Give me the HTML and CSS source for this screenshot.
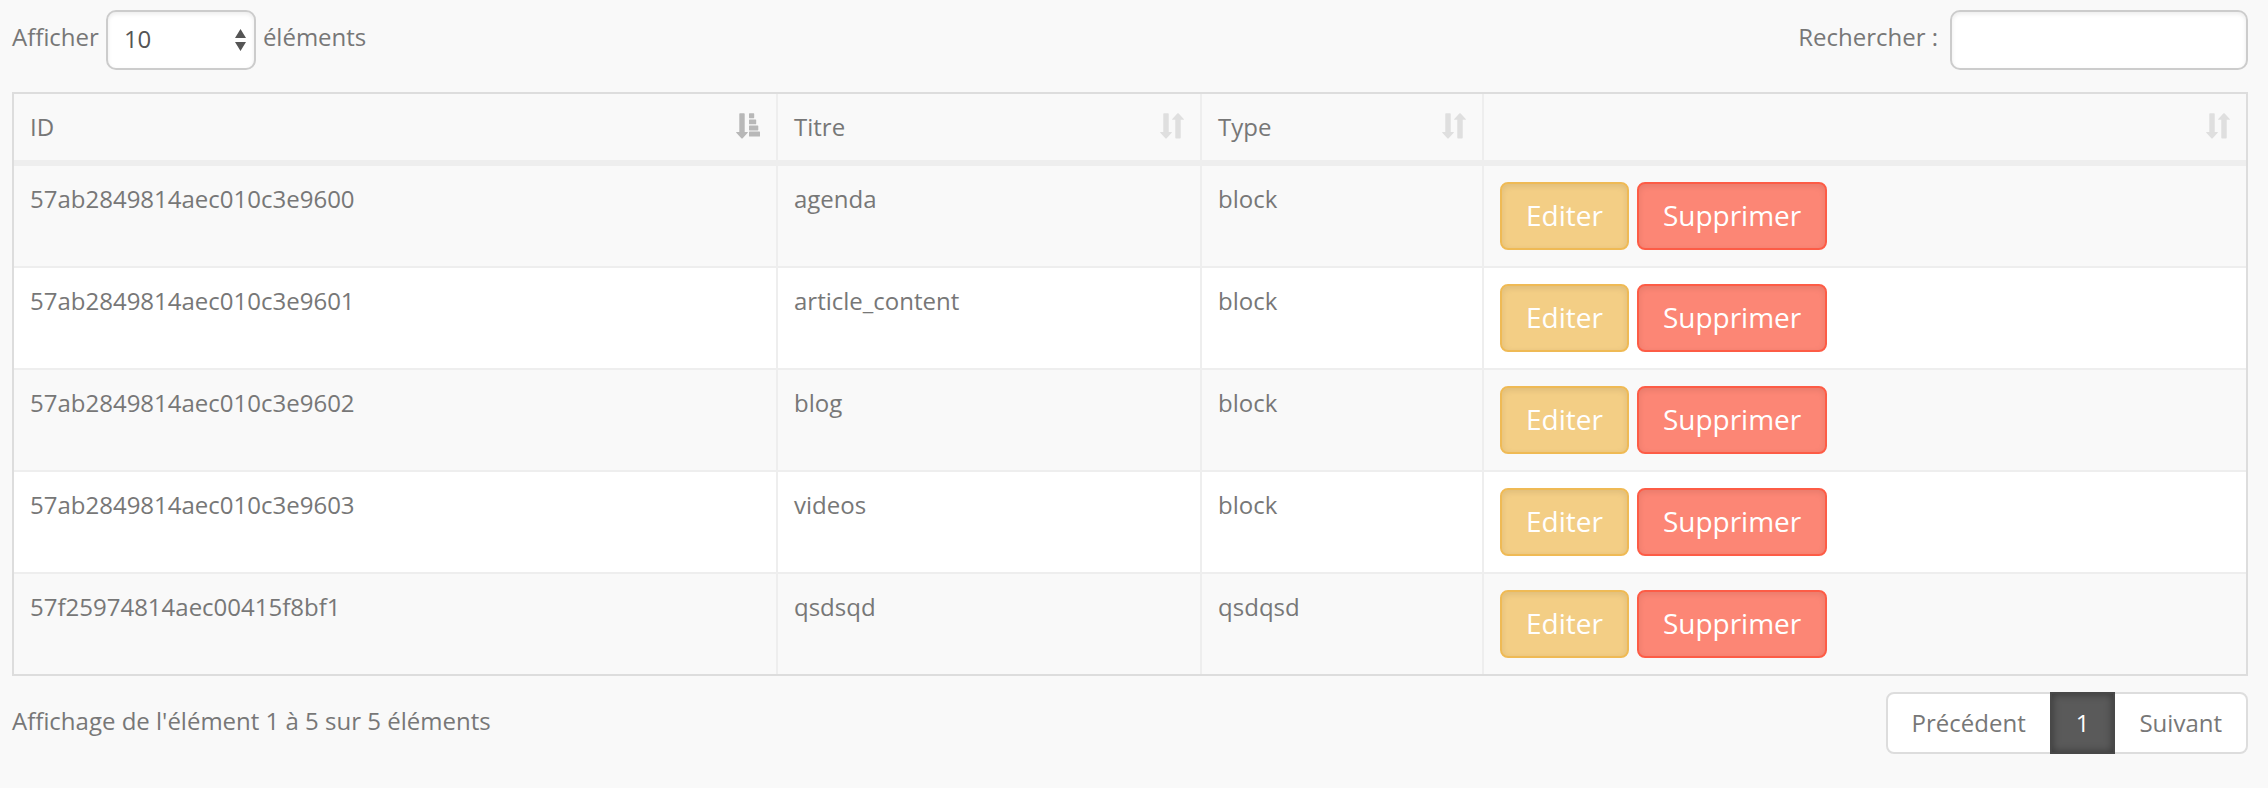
FILE: index.html
```html
<!DOCTYPE html>
<html lang="fr">
<head>
<meta charset="utf-8">
<title>Éléments</title>
<link rel="stylesheet" href="styles.css">
</head>
<body>
<svg class="sprite" aria-hidden="true">
  <symbol id="sort-both" viewBox="0 0 24 26">
    <path d="M4 .3h4a.7.7 0 0 1 .7.7v18h2.7q.9 0 .3.8L6.7 25.2q-.7.6-1.4 0L.3 19.8q-.6-.8.3-.8h2.7V1A.7.7 0 0 1 4 .3z"/>
    <path d="M16 25.5h4a.7.7 0 0 0 .7-.7V6.8h2.7q.9 0 .3-.8L18.7.6q-.7-.6-1.4 0L12.3 6q-.6.8.3.8h2.7v18a.7.7 0 0 0 .7.7z"/>
  </symbol>
  <symbol id="sort-asc" viewBox="0 0 24 26">
    <path d="M4 .3h4a.7.7 0 0 1 .7.7v18h2.7q.9 0 .3.8L6.7 25.2q-.7.6-1.4 0L.3 19.8q-.6-.8.3-.8h2.7V1A.7.7 0 0 1 4 .3z"/>
    <rect x="13" y=".3" width="5.2" height="4.9" rx=".6"/>
    <rect x="13" y="6.4" width="7.2" height="4.9" rx=".6"/>
    <rect x="13" y="12.5" width="9.3" height="4.9" rx=".6"/>
    <rect x="13" y="18.6" width="11" height="4.9" rx=".6"/>
  </symbol>
</svg>

<div class="toolbar">
  <div class="field">
    <label class="field-text" for="length">Afficher</label>
    <div class="select">
      <select id="length" class="control length">
        <option>10</option>
        <option>25</option>
        <option>50</option>
        <option>100</option>
      </select>
      <svg class="select-arrows" viewBox="0 0 11 22" aria-hidden="true"><path d="M5.500 0 11 9H0zM0 13h11l-5.500 9z"/></svg>
    </div>
    <span class="field-text">éléments</span>
  </div>
  <div class="field search">
    <label class="field-text" for="search">Rechercher :</label>
    <input id="search" class="control search-input" type="search">
  </div>
</div>

<table class="grid">
  <colgroup><col class="col-id"><col class="col-title"><col class="col-type"><col></colgroup>
  <thead>
    <tr>
      <th scope="col" aria-sort="ascending"><div class="head">ID<svg class="sort active"><use href="#sort-asc"/></svg></div></th>
      <th scope="col"><div class="head">Titre<svg class="sort"><use href="#sort-both"/></svg></div></th>
      <th scope="col"><div class="head">Type<svg class="sort"><use href="#sort-both"/></svg></div></th>
      <th scope="col" aria-label="Actions"><div class="head end"><svg class="sort"><use href="#sort-both"/></svg></div></th>
    </tr>
  </thead>
  <tbody>
    <tr><td>57ab2849814aec010c3e9600</td><td>agenda</td><td>block</td><td><div class="actions"><button class="btn edit" type="button">Editer</button><button class="btn delete" type="button">Supprimer</button></div></td></tr>
    <tr><td>57ab2849814aec010c3e9601</td><td>article_content</td><td>block</td><td><div class="actions"><button class="btn edit" type="button">Editer</button><button class="btn delete" type="button">Supprimer</button></div></td></tr>
    <tr><td>57ab2849814aec010c3e9602</td><td>blog</td><td>block</td><td><div class="actions"><button class="btn edit" type="button">Editer</button><button class="btn delete" type="button">Supprimer</button></div></td></tr>
    <tr><td>57ab2849814aec010c3e9603</td><td>videos</td><td>block</td><td><div class="actions"><button class="btn edit" type="button">Editer</button><button class="btn delete" type="button">Supprimer</button></div></td></tr>
    <tr><td>57f25974814aec00415f8bf1</td><td>qsdsqd</td><td>qsdqsd</td><td><div class="actions"><button class="btn edit" type="button">Editer</button><button class="btn delete" type="button">Supprimer</button></div></td></tr>
  </tbody>
</table>

<div class="footer">
  <div class="info">Affichage de l'élément 1 à 5 sur 5 éléments</div>
  <nav class="pagination" aria-label="Pagination">
    <a class="page" href="#">Précédent</a>
    <a class="page current" href="#" aria-current="page">1</a>
    <a class="page" href="#">Suivant</a>
  </nav>
</div>
</body>
</html>
```
FILE: styles.css
```css
* {
  box-sizing: border-box;
}

body {
  margin: 0;
  padding: 10px 20px 20px 12px;
  background: #f9f9f9;
  color: #777;
  font: 24px/34px "Open Sans", "Noto Sans", sans-serif;
}

.sprite {
  display: none;
}

.toolbar,
.footer {
  display: flex;
  justify-content: space-between;
  align-items: flex-start;
}

.field {
  display: flex;
  align-items: flex-start;
  gap: 7px;
}

.search {
  gap: 12px;
}

.field-text {
  padding-top: 10px;
}

.control {
  display: block;
  height: 60px;
  margin: 0;
  padding: 8px 16px 10px;
  border: 2px solid #ccc;
  border-radius: 10px;
  background: #fff;
  box-shadow: inset 0 2px 4px rgba(0, 0, 0, 0.08);
  color: #555;
  font: inherit;
  appearance: none;
}

.select {
  position: relative;
}

.length {
  width: 150px;
}

.select-arrows {
  position: absolute;
  top: 19px;
  right: 10px;
  width: 11px;
  height: 22px;
  fill: #555;
  pointer-events: none;
}

.search-input {
  width: 298px;
}

.grid {
  width: 100%;
  margin-top: 22px;
  border: 2px solid #ddd;
  border-collapse: separate;
  border-spacing: 0;
  table-layout: fixed;
}

.col-id {
  width: 34.23%;
}

.col-title {
  width: 19%;
}

.col-type {
  width: 12.63%;
}

th,
td {
  padding: 16px;
  border-right: 2px solid #eee;
  border-bottom: 2px solid #eee;
  text-align: left;
  vertical-align: top;
}

th {
  border-bottom-width: 6px;
  font-weight: 500;
}

th:last-child,
td:last-child {
  border-right: 0;
}

tbody tr:nth-child(even) {
  background: #fff;
}

tbody tr:last-child td {
  border-bottom: 0;
}

.head {
  display: flex;
  justify-content: space-between;
  height: 34px;
}

.end {
  justify-content: flex-end;
}

.sort {
  width: 24px;
  height: 26px;
  margin-top: 3px;
  fill: #dfdfdf;
}

.active {
  fill: #b8b8b8;
}

.actions {
  display: flex;
  gap: 8px;
}

.btn {
  margin: 0;
  padding: 11px 24px 13px;
  border: 2px solid;
  border-radius: 8px;
  box-shadow: inset 0 2px 6px rgba(0, 0, 0, 0.09);
  color: #fff;
  font: 500 28px/40px "Open Sans", "Noto Sans", sans-serif;
}

.edit {
  border-color: #efba55;
  background: #f3ce85;
}

.delete {
  border-color: #fd5c46;
  background: #fc8675;
}

.info {
  padding-top: 28px;
}

.pagination {
  display: flex;
  margin-top: 16px;
}

.page {
  padding: 12px 24px;
  border: 2px solid #ddd;
  background: #fff;
  color: #777;
  text-decoration: none;
}

.page + .page {
  margin-left: -2px;
}

.page:first-child {
  border-radius: 8px 0 0 8px;
}

.page:last-child {
  border-radius: 0 8px 8px 0;
}

.current {
  z-index: 1;
  border-color: #484848;
  background: #5a5a5a;
  box-shadow: inset 0 0 8px rgba(0, 0, 0, 0.4);
  color: #fff;
}
```
